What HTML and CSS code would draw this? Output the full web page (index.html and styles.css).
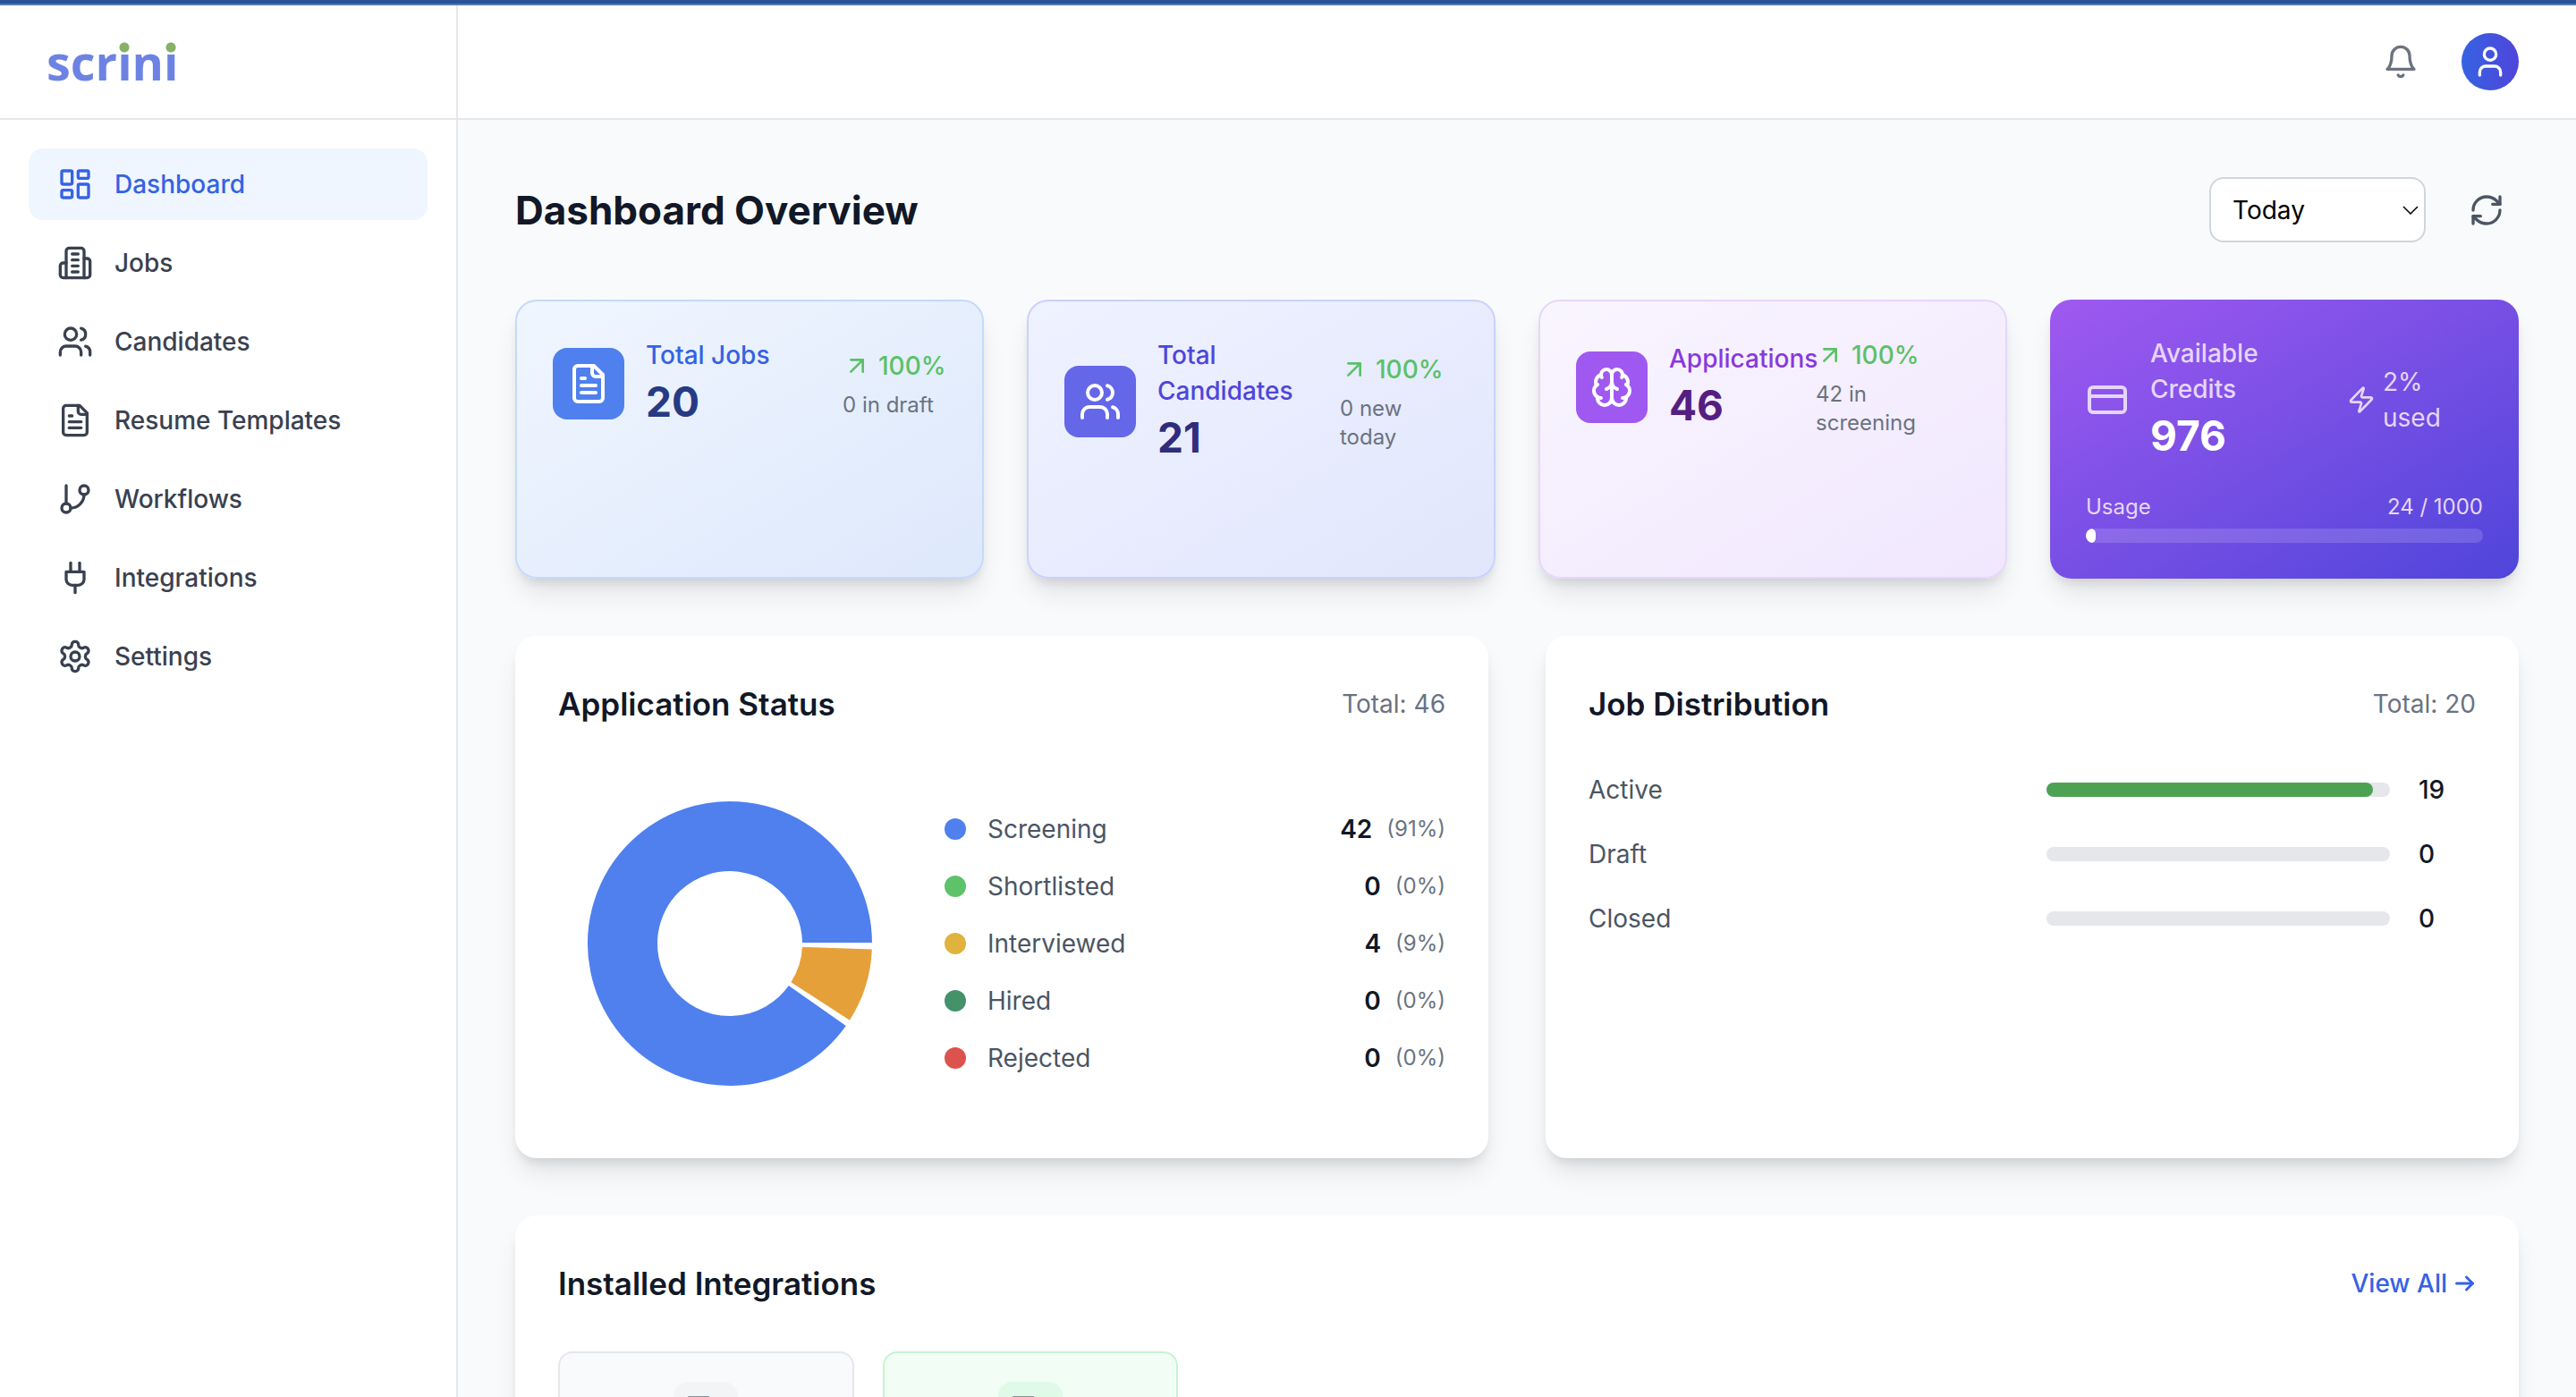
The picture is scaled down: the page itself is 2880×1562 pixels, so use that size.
FILE: index.html
```
<!DOCTYPE html>
<html lang="en">
<head>
<meta charset="utf-8">
<title>Scrini – Dashboard</title>
<link rel="stylesheet" href="styles.css">
</head>
<body>
<svg class="sprite" aria-hidden="true">
  <symbol id="i-dashboard" viewBox="0 0 24 24"><rect width="7" height="9" x="3" y="3" rx="1"/><rect width="7" height="5" x="14" y="3" rx="1"/><rect width="7" height="9" x="14" y="12" rx="1"/><rect width="7" height="5" x="3" y="16" rx="1"/></symbol>
  <symbol id="i-building" viewBox="0 0 24 24"><path d="M6 22V4a2 2 0 0 1 2-2h8a2 2 0 0 1 2 2v18Z"/><path d="M6 12H4a2 2 0 0 0-2 2v6a2 2 0 0 0 2 2h2"/><path d="M18 9h2a2 2 0 0 1 2 2v9a2 2 0 0 1-2 2h-2"/><path d="M10 6h4"/><path d="M10 10h4"/><path d="M10 14h4"/><path d="M10 18h4"/></symbol>
  <symbol id="i-users" viewBox="0 0 24 24"><path d="M16 21v-2a4 4 0 0 0-4-4H6a4 4 0 0 0-4 4v2"/><circle cx="9" cy="7" r="4"/><path d="M22 21v-2a4 4 0 0 0-3-3.87"/><path d="M16 3.13a4 4 0 0 1 0 7.75"/></symbol>
  <symbol id="i-file" viewBox="0 0 24 24"><path d="M15 2H6a2 2 0 0 0-2 2v16a2 2 0 0 0 2 2h12a2 2 0 0 0 2-2V7Z"/><path d="M14 2v4a2 2 0 0 0 2 2h4"/><path d="M10 9H8"/><path d="M16 13H8"/><path d="M16 17H8"/></symbol>
  <symbol id="i-branch" viewBox="0 0 24 24"><line x1="6" x2="6" y1="3" y2="15"/><circle cx="18" cy="6" r="3"/><circle cx="6" cy="18" r="3"/><path d="M18 9a9 9 0 0 1-9 9"/></symbol>
  <symbol id="i-plug" viewBox="0 0 24 24"><path d="M12 22v-5"/><path d="M9 8V2"/><path d="M15 8V2"/><path d="M18 8v5a4 4 0 0 1-4 4h-4a4 4 0 0 1-4-4V8Z"/></symbol>
  <symbol id="i-settings" viewBox="0 0 24 24"><path d="M12.22 2h-.44a2 2 0 0 0-2 2v.18a2 2 0 0 1-1 1.73l-.43.25a2 2 0 0 1-2 0l-.15-.08a2 2 0 0 0-2.73.73l-.22.38a2 2 0 0 0 .73 2.73l.15.1a2 2 0 0 1 1 1.72v.51a2 2 0 0 1-1 1.74l-.15.09a2 2 0 0 0-.73 2.73l.22.38a2 2 0 0 0 2.73.73l.15-.08a2 2 0 0 1 2 0l.43.25a2 2 0 0 1 1 1.73V20a2 2 0 0 0 2 2h.44a2 2 0 0 0 2-2v-.18a2 2 0 0 1 1-1.73l.43-.25a2 2 0 0 1 2 0l.15.08a2 2 0 0 0 2.73-.73l.22-.39a2 2 0 0 0-.73-2.73l-.15-.08a2 2 0 0 1-1-1.74v-.5a2 2 0 0 1 1-1.74l.15-.09a2 2 0 0 0 .73-2.73l-.22-.38a2 2 0 0 0-2.73-.73l-.15.08a2 2 0 0 1-2 0l-.43-.25a2 2 0 0 1-1-1.73V4a2 2 0 0 0-2-2z"/><circle cx="12" cy="12" r="3"/></symbol>
  <symbol id="i-bell" viewBox="0 0 24 24"><path d="M6 8a6 6 0 0 1 12 0c0 7 3 9 3 9H3s3-2 3-9"/><path d="M10.3 21a1.94 1.94 0 0 0 3.4 0"/></symbol>
  <symbol id="i-user" viewBox="0 0 24 24"><path d="M19 21v-2a4 4 0 0 0-4-4H9a4 4 0 0 0-4 4v2"/><circle cx="12" cy="7" r="4"/></symbol>
  <symbol id="i-refresh" viewBox="0 0 24 24"><path d="M3 12a9 9 0 0 1 9-9 9.75 9.75 0 0 1 6.74 2.74L21 8"/><path d="M21 3v5h-5"/><path d="M21 12a9 9 0 0 1-9 9 9.75 9.75 0 0 1-6.74-2.74L3 16"/><path d="M8 16H3v5"/></symbol>
  <symbol id="i-up-right" viewBox="0 0 24 24"><path d="M7 7h10v10"/><path d="M7 17 17 7"/></symbol>
  <symbol id="i-brain" viewBox="0 0 24 24"><path d="M12 5a3 3 0 1 0-5.997.125 4 4 0 0 0-2.526 5.77 4 4 0 0 0 .556 6.588A4 4 0 1 0 12 18Z"/><path d="M12 5a3 3 0 1 1 5.997.125 4 4 0 0 1 2.526 5.77 4 4 0 0 1-.556 6.588A4 4 0 1 1 12 18Z"/><path d="M15 13a4.5 4.5 0 0 1-3-4 4.5 4.5 0 0 1-3 4"/><path d="M17.599 6.5a3 3 0 0 0 .399-1.375"/><path d="M6.003 5.125A3 3 0 0 0 6.401 6.5"/><path d="M3.477 10.896a4 4 0 0 1 .585-.396"/><path d="M19.938 10.5a4 4 0 0 1 .585.396"/><path d="M6 18a4 4 0 0 1-1.967-.516"/><path d="M19.967 17.484A4 4 0 0 1 18 18"/></symbol>
  <symbol id="i-card" viewBox="0 0 24 24"><rect width="20" height="14" x="2" y="5" rx="2"/><line x1="2" x2="22" y1="10" y2="10"/></symbol>
  <symbol id="i-zap" viewBox="0 0 24 24"><path d="M4 14a1 1 0 0 1-.78-1.63l9.9-10.2a.5.5 0 0 1 .86.46l-1.92 6.02A1 1 0 0 0 13 10h7a1 1 0 0 1 .78 1.63l-9.9 10.2a.5.5 0 0 1-.86-.46l1.92-6.02A1 1 0 0 0 11 14z"/></symbol>
  <symbol id="i-right" viewBox="0 0 24 24"><path d="M2.5 12h18"/><path d="m13.5 5 7 7-7 7"/></symbol>
  <symbol id="i-doc" viewBox="0 0 40 40"><path d="M1 1h22l10 10v28H1z"/></symbol>
</svg>

<div class="app">
  <aside class="sidebar">
    <div class="brand"><a class="logo" href="#">scrini</a></div>
    <nav class="nav">
      <a class="nav-item active" href="#"><svg class="icon"><use href="#i-dashboard"/></svg>Dashboard</a>
      <a class="nav-item" href="#"><svg class="icon"><use href="#i-building"/></svg>Jobs</a>
      <a class="nav-item" href="#"><svg class="icon"><use href="#i-users"/></svg>Candidates</a>
      <a class="nav-item" href="#"><svg class="icon"><use href="#i-file"/></svg>Resume Templates</a>
      <a class="nav-item" href="#"><svg class="icon"><use href="#i-branch"/></svg>Workflows</a>
      <a class="nav-item" href="#"><svg class="icon"><use href="#i-plug"/></svg>Integrations</a>
      <a class="nav-item" href="#"><svg class="icon"><use href="#i-settings"/></svg>Settings</a>
    </nav>
  </aside>

  <div class="page">
    <header class="topbar">
      <button class="icon-button muted" type="button" aria-label="Notifications"><svg class="icon"><use href="#i-bell"/></svg></button>
      <button class="avatar" type="button" aria-label="Account"><svg class="icon"><use href="#i-user"/></svg></button>
    </header>

    <main class="content">
      <div class="title-row">
        <h1>Dashboard Overview</h1>
        <div class="controls">
          <div class="select-wrap">
            <select class="select" aria-label="Period"><option>Today</option><option>This week</option><option>This month</option></select>
            <svg class="chevron" viewBox="0 0 36 20"><path d="M2 2l16 16 16-16"/></svg>
          </div>
          <button class="icon-button" type="button" aria-label="Refresh"><svg class="icon"><use href="#i-refresh"/></svg></button>
        </div>
      </div>

      <section class="stats">
        <article class="stat blue">
          <div class="stat-row">
            <div class="badge"><svg class="icon-lg"><use href="#i-file"/></svg></div>
            <div class="stat-text"><p class="label">Total Jobs</p><p class="value">20</p></div>
            <div class="trend"><p class="up"><svg class="icon-sm"><use href="#i-up-right"/></svg>100%</p><p class="note">0 in draft</p></div>
          </div>
        </article>
        <article class="stat indigo">
          <div class="stat-row">
            <div class="badge"><svg class="icon-lg"><use href="#i-users"/></svg></div>
            <div class="stat-text"><p class="label">Total<br>Candidates</p><p class="value">21</p></div>
            <div class="trend"><p class="up"><svg class="icon-sm"><use href="#i-up-right"/></svg>100%</p><p class="note">0 new<br>today</p></div>
          </div>
        </article>
        <article class="stat purple">
          <div class="stat-row">
            <div class="badge"><svg class="icon-lg"><use href="#i-brain"/></svg></div>
            <div class="stat-text"><p class="label">Applications</p><p class="value">46</p></div>
            <div class="trend"><p class="up"><svg class="icon-sm"><use href="#i-up-right"/></svg>100%</p><p class="note">42 in<br>screening</p></div>
          </div>
        </article>
        <article class="stat credits">
          <div class="stat-row">
            <svg class="icon-lg"><use href="#i-card"/></svg>
            <div class="stat-text"><p class="label">Available<br>Credits</p><p class="value">976</p></div>
            <div class="trend used"><svg class="icon-sm"><use href="#i-zap"/></svg><span>2%<br>used</span></div>
          </div>
          <div class="usage"><span>Usage</span><span>24 / 1000</span></div>
          <div class="usage-bar"><div class="usage-fill" style="width: 2.4%"></div></div>
        </article>
      </section>

      <section class="panels">
        <article class="panel">
          <div class="panel-head"><h2>Application Status</h2><span class="total">Total: 46</span></div>
          <div class="status">
            <div class="chart">
              <svg class="donut" viewBox="0 0 320 320" role="img" aria-label="Application status chart">
                <path class="slice-screening" d="M320 160A160 160 0 1 0 291.1 251.7L225.6 205.8A80 80 0 1 1 240 160Z"/>
                <path class="slice-interviewed" d="M294.3 247A160 160 0 0 0 319.9 165.6L240 162.8A80 80 0 0 1 227.1 203.5Z"/>
              </svg>
            </div>
            <ul class="legend">
              <li><i class="dot screening"></i><span class="name">Screening</span><b>42</b><small>(91%)</small></li>
              <li><i class="dot shortlisted"></i><span class="name">Shortlisted</span><b>0</b><small>(0%)</small></li>
              <li><i class="dot interviewed"></i><span class="name">Interviewed</span><b>4</b><small>(9%)</small></li>
              <li><i class="dot hired"></i><span class="name">Hired</span><b>0</b><small>(0%)</small></li>
              <li><i class="dot rejected"></i><span class="name">Rejected</span><b>0</b><small>(0%)</small></li>
            </ul>
          </div>
        </article>
        <article class="panel">
          <div class="panel-head"><h2>Job Distribution</h2><span class="total">Total: 20</span></div>
          <ul class="bars">
            <li><span class="name">Active</span><div class="bar"><div class="bar-fill" style="width: 95%"></div></div><b>19</b></li>
            <li><span class="name">Draft</span><div class="bar"></div><b>0</b></li>
            <li><span class="name">Closed</span><div class="bar"></div><b>0</b></li>
          </ul>
        </article>
      </section>

      <section class="panel">
        <div class="panel-head"><h2>Installed Integrations</h2><a class="view-all" href="#">View All<svg class="icon-xs"><use href="#i-right"/></svg></a></div>
        <div class="tiles">
          <div class="tile"><div class="tile-icon"><svg class="icon doc"><use href="#i-doc"/></svg></div></div>
          <div class="tile installed"><div class="tile-icon"><svg class="icon doc"><use href="#i-doc"/></svg></div></div>
        </div>
      </section>
    </main>
  </div>
</div>
</body>
</html>
```

FILE: styles.css
```
* { box-sizing: border-box; }

body, h1, h2, p, ul { margin: 0; padding: 0; }

html { height: 100%; }

body {
  height: 100%;
  overflow: hidden;
  background: #f9fafc;
  color: #111827;
  font-family: Inter, "Liberation Sans", sans-serif;
  font-size: 28px;
  line-height: 40px;
}

ul { list-style: none; }
a { color: inherit; text-decoration: none; }
button { padding: 0; border: 0; background: none; color: inherit; font: inherit; }
.sprite { position: absolute; width: 0; height: 0; }

.icon, .icon-lg, .icon-sm, .icon-xs {
  flex: none;
  fill: none;
  stroke: currentColor;
  stroke-width: 2;
  stroke-linecap: round;
  stroke-linejoin: round;
}
.icon { width: 40px; height: 40px; }
.icon-lg { width: 48px; height: 48px; }
.icon-sm { width: 32px; height: 32px; }
.icon-xs { width: 24px; height: 24px; stroke-width: 3; }

.app {
  display: flex;
  height: 100%;
  border-top: 4px solid #2a5298;
  box-shadow: inset 0 2px #5478ae;
  padding-top: 2px;
}

/* Sidebar */
.sidebar {
  flex: none;
  width: 512px;
  border-right: 2px solid #e5e7eb;
  background: #fff;
}
.brand {
  display: flex;
  align-items: center;
  height: 128px;
  padding: 0 52px;
  border-bottom: 2px solid #e5e7eb;
}
/* Blue letters; the dots of both i's are painted as green circles */
.logo {
  background:
    radial-gradient(circle at 87px 16px, #86b267 5px, transparent 6px) border-box,
    radial-gradient(circle at 139px 16px, #86b267 5px, transparent 6px) border-box,
    linear-gradient(transparent 22px, #6d83e3 22px) text;
  color: transparent;
  font: bold 54px/64px "Open Sans", sans-serif;
}
.nav {
  display: flex;
  flex-direction: column;
  gap: 8px;
  padding: 32px;
}
.nav-item {
  display: flex;
  align-items: center;
  gap: 24px;
  height: 80px;
  padding: 0 32px;
  border-radius: 16px;
  color: #394150;
  font-weight: 500;
}
.nav-item.active { background: #eff6ff; color: #3662e3; }

/* Header */
.page { flex: 1; min-width: 0; overflow: hidden; }
.topbar {
  display: flex;
  align-items: center;
  justify-content: flex-end;
  gap: 32px;
  height: 128px;
  padding: 0 64px;
  border-bottom: 2px solid #e5e7eb;
  background: #fff;
}
.icon-button { display: flex; padding: 16px; color: #4b5563; }
.icon-button.muted { color: #6b7280; }
.avatar {
  display: grid;
  place-items: center;
  width: 64px;
  height: 64px;
  border-radius: 50%;
  background: linear-gradient(90deg, #3662e3, #4f45da);
  color: #fff;
}

/* Content */
.content {
  display: flex;
  flex-direction: column;
  gap: 64px;
  padding: 64px;
}
.title-row, .controls, .panel-head { display: flex; align-items: center; }
.title-row, .panel-head { justify-content: space-between; }
h1 { font-size: 44px; font-weight: 700; line-height: 64px; }
.controls { gap: 32px; }
.select-wrap { display: grid; align-items: center; }
.select {
  grid-area: 1 / 1;
  width: 242px;
  height: 73px;
  padding: 0 24px;
  border: 2px solid #d1d5db;
  border-radius: 16px;
  background: #fff;
  color: #000;
  font: inherit;
  appearance: none;
}
.chevron {
  grid-area: 1 / 1;
  justify-self: end;
  width: 18px;
  height: 10px;
  margin-right: 8px;
  fill: none;
  stroke: #000;
  stroke-width: 3;
  pointer-events: none;
}

/* Stat cards */
.stats { display: grid; grid-template-columns: repeat(4, minmax(0, 1fr)); gap: 48px; }
.stat {
  padding: 40px;
  border: 2px solid;
  border-radius: 24px;
  box-shadow: 0 20px 30px -6px rgba(0, 0, 0, .1), 0 8px 12px -4px rgba(0, 0, 0, .1);
}
.stat-row { display: flex; align-items: center; gap: 24px; }
.badge {
  display: grid;
  flex: none;
  place-items: center;
  width: 80px;
  height: 80px;
  border-radius: 16px;
  color: #fff;
}
.stat-text { flex: 1; min-width: 0; }
.label { font-weight: 500; white-space: nowrap; }
.value { font-size: 46px; font-weight: 700; line-height: 64px; }
.trend { flex: none; width: 116px; margin-left: -24px; }
.up { display: flex; align-items: center; gap: 8px; color: #5bc168; font-weight: 500; }
.note { margin-top: 8px; color: #6b7280; font-size: 24px; line-height: 32px; }

.blue { border-color: #c3dafc; background: linear-gradient(to bottom right, #f0f6ff, #dde8fb); }
.blue .badge { background: #4f80ee; }
.blue .label { color: #3662e3; }
.blue .value { color: #273a84; }

.indigo { border-color: #c9d2fc; background: linear-gradient(to bottom right, #eff2ff, #e1e6fc); }
.indigo .badge { background: #6467e8; }
.indigo .label { color: #4f45da; }
.indigo .value { color: #302c7c; }
.indigo .trend { width: 132px; }

.purple { border-color: #e6d6fc; background: linear-gradient(to bottom right, #f9f5ff, #f0e7fd); }
.purple .badge { background: #9f59f0; }
.purple .label { color: #8839dd; }
.purple .value { color: #541f81; }
.purple .trend { width: 172px; }

.credits {
  border: 0;
  background: linear-gradient(to bottom right, #9f59f0, #4f45da);
  color: #e6d6fc;
}
.credits .value { color: #fff; }
.credits .used { display: flex; align-items: center; gap: 8px; width: 152px; }
.usage {
  display: flex;
  justify-content: space-between;
  margin: 32px 0 8px;
  font-size: 24px;
  line-height: 32px;
}
.usage-bar { overflow: hidden; height: 16px; border-radius: 8px; background: rgba(255, 255, 255, .15); }
.usage-fill { height: 100%; border-radius: 8px; background: #fff; }

/* Panels */
.panels { display: grid; grid-template-columns: 1fr 1fr; gap: 64px; }
.panel {
  padding: 48px;
  border-radius: 24px;
  background: #fff;
  box-shadow: 0 20px 30px -6px rgba(0, 0, 0, .1), 0 8px 12px -4px rgba(0, 0, 0, .1);
}
.panel-head { margin-bottom: 48px; }
h2 { font-size: 35px; font-weight: 600; line-height: 56px; }
.total { color: #6b7280; }
.status { display: flex; align-items: center; gap: 48px; }
.chart { display: grid; flex: none; place-items: center; width: 384px; height: 384px; }
.donut { width: 320px; height: 320px; overflow: visible; stroke: #fff; stroke-width: 2; }
.slice-screening { fill: #4f80ee; }
.slice-interviewed { fill: #e6a03a; }
.legend { display: flex; flex: 1; flex-direction: column; gap: 24px; }
.legend li, .bars li { display: flex; align-items: center; }
.name { flex: 1; color: #4b5563; }
b { font-weight: 600; }
.legend small { margin-left: 16px; color: #6b7280; font-size: 24px; }
.dot { width: 24px; height: 24px; margin-right: 24px; border-radius: 50%; }
.screening { background: #4f80ee; }
.shortlisted { background: #5ec269; }
.interviewed { background: #e0b33e; }
.hired { background: #43926a; }
.rejected { background: #dc524c; }

.bars { display: flex; flex-direction: column; gap: 32px; }
.bar { width: 384px; height: 16px; border-radius: 8px; background: #e5e7eb; }
.bar-fill { height: 100%; border-radius: 8px; background: #4da153; }
.bars b { width: 64px; margin-left: 32px; font-weight: 500; }

/* Integrations */
.view-all { display: flex; align-items: center; gap: 8px; color: #3662e3; font-weight: 500; }
.tiles { display: grid; grid-template-columns: repeat(6, 1fr); gap: 32px; }
.tile {
  display: flex;
  justify-content: center;
  height: 240px;
  padding: 32px;
  border: 2px solid #e5e7eb;
  border-radius: 16px;
  background: #f9fafc;
}
.tile-icon { display: grid; place-items: center; width: 72px; height: 72px; border-radius: 16px; background: #f3f4f6; }
.installed { border-color: #c4f5d1; background: #f2fdf5; }
.installed .tile-icon { background: #e0fae8; }
.doc { color: #8b8f96; }
```
